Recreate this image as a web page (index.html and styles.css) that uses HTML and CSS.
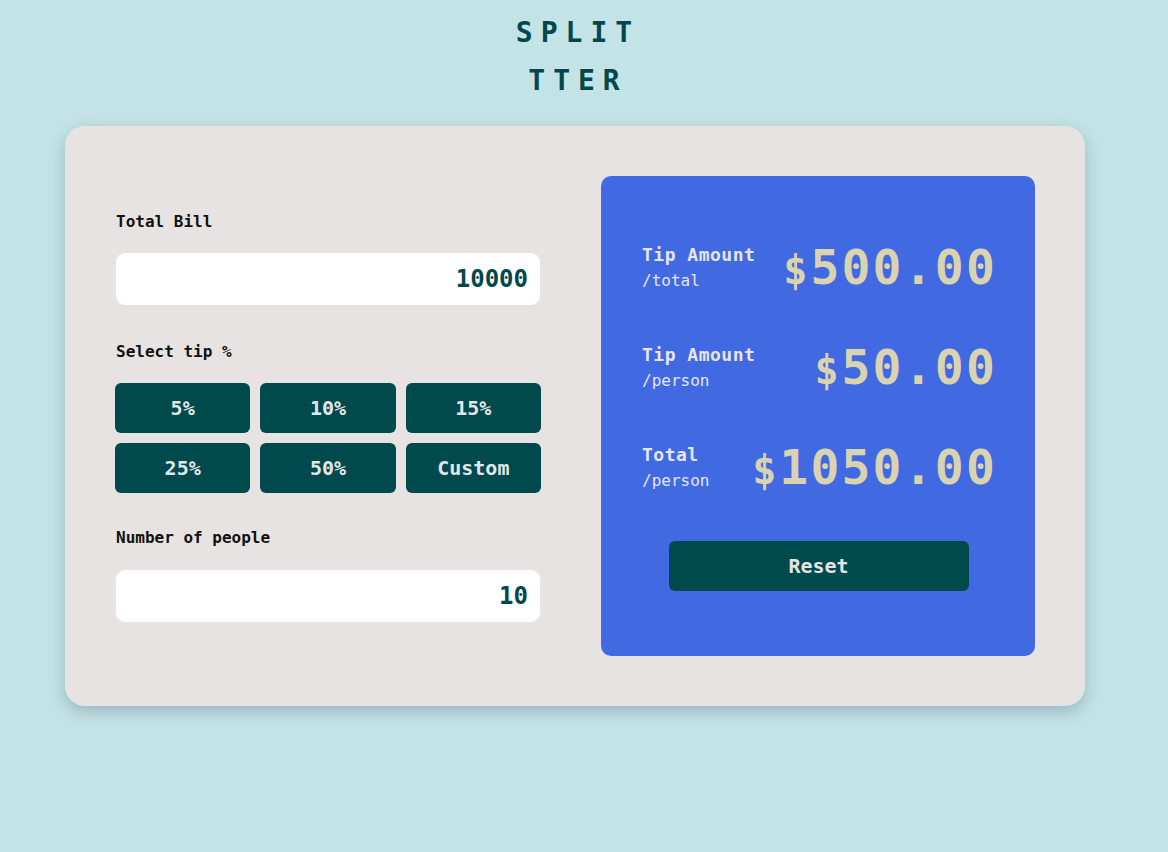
FILE: index.html
```html
<!DOCTYPE html>
<html lang="en">
<head>
<meta charset="utf-8">
<title>Splitter</title>
<link rel="stylesheet" href="styles.css">
</head>
<body>
<div class="wrap">
  <h1 class="title">SPLIT<br>TTER</h1>
  <main class="card">
    <section class="inputs">
      <label class="label" for="bill">Total Bill</label>
      <input class="field" id="bill" type="text" value="10000">
      <div class="label label-tip">Select tip %</div>
      <div class="tips">
        <button class="tip">5%</button>
        <button class="tip">10%</button>
        <button class="tip">15%</button>
        <button class="tip">25%</button>
        <button class="tip">50%</button>
        <button class="tip">Custom</button>
      </div>
      <label class="label label-people" for="people">Number of people</label>
      <input class="field" id="people" type="text" value="10">
    </section>
    <section class="result">
      <div class="row">
        <div class="row-label"><div class="name">Tip Amount</div><div class="unit">/total</div></div>
        <div class="amount"><span class="dollar">$</span>500.00</div>
      </div>
      <div class="row">
        <div class="row-label"><div class="name">Tip Amount</div><div class="unit">/person</div></div>
        <div class="amount"><span class="dollar">$</span>50.00</div>
      </div>
      <div class="row">
        <div class="row-label"><div class="name">Total</div><div class="unit">/person</div></div>
        <div class="amount"><span class="dollar">$</span>1050.00</div>
      </div>
      <button class="reset">Reset</button>
    </section>
  </main>
</div>
</body>
</html>
```
FILE: styles.css
```css
* { box-sizing: border-box; }
html, body { margin: 0; padding: 0; }
body {
  background: #c4e3e6;
  font-family: "DejaVu Sans Mono", "Liberation Mono", monospace;
  width: 1168px;
  height: 852px;
  overflow: hidden;
}
.wrap {
  width: 1020px;
  margin-left: 65px;
}
.title {
  margin: 9px 0 21px;
  padding-left: 6px;
  text-align: center;
  font-size: 28px;
  line-height: 48px;
  letter-spacing: 8px;
  font-weight: bold;
  color: #02474b;
}
.card {
  height: 580px;
  background: #e7e3e2;
  border-radius: 20px;
  box-shadow: 0 6px 16px rgba(40, 80, 90, 0.28);
  padding: 50px;
  display: flex;
  align-items: center;
  gap: 60px;
}
.inputs {
  width: 426px;
  display: flex;
  flex-direction: column;
}
.label {
  display: block;
  font-size: 16px;
  line-height: 20px;
  font-weight: bold;
  color: #111;
  margin-left: 1px;
  margin-top: 2px;
  margin-bottom: 21px;
}
.label-tip { margin-top: 37px; margin-bottom: 21px; }
.label-people { margin-top: 35px; margin-bottom: 22px; }
.field {
  display: block;
  margin: 0 1px;
  height: 52px;
  border: none;
  border-radius: 9px;
  background: #fff;
  text-align: right;
  padding: 0 12px;
  font-family: inherit;
  font-size: 24px;
  font-weight: bold;
  color: #02474b;
  outline: none;
}
.tips {
  display: grid;
  grid-template-columns: repeat(3, 1fr);
  gap: 10px;
}
.tip {
  height: 50px;
  border: none;
  border-radius: 6px;
  background: #00494d;
  color: #e2e6e6;
  font-family: inherit;
  font-size: 20px;
  font-weight: bold;
  padding: 0;
}
.result {
  width: 434px;
  height: 480px;
  background: #4169e1;
  border-radius: 10px;
  padding: 61px 40px 0 41px;
  display: flex;
  flex-direction: column;
}
.row {
  height: 60px;
  display: flex;
  align-items: center;
  justify-content: space-between;
  margin-bottom: 40px;
}
.row:nth-child(3) { margin-bottom: 44px; }
.row-label { color: #e6e6fa; padding-top: 1px; }
.name {
  font-size: 18px;
  line-height: 26px;
  font-weight: bold;
  letter-spacing: 0.5px;
}
.unit {
  font-size: 16px;
  line-height: 26px;
}
.amount {
  color: #dad3b0;
  font-size: 48px;
  font-weight: bold;
  letter-spacing: 2.2px;
  line-height: 60px;
  margin-right: -2px;
  padding-top: 3px;
}
.dollar {
  font-size: 40px;
  letter-spacing: 0;
  margin-right: 3px;
}
.reset {
  align-self: center;
  width: 300px;
  height: 50px;
  border: none;
  border-radius: 6px;
  background: #00494d;
  color: #e4e4e4;
  font-family: inherit;
  font-size: 20px;
  font-weight: bold;
}
```
